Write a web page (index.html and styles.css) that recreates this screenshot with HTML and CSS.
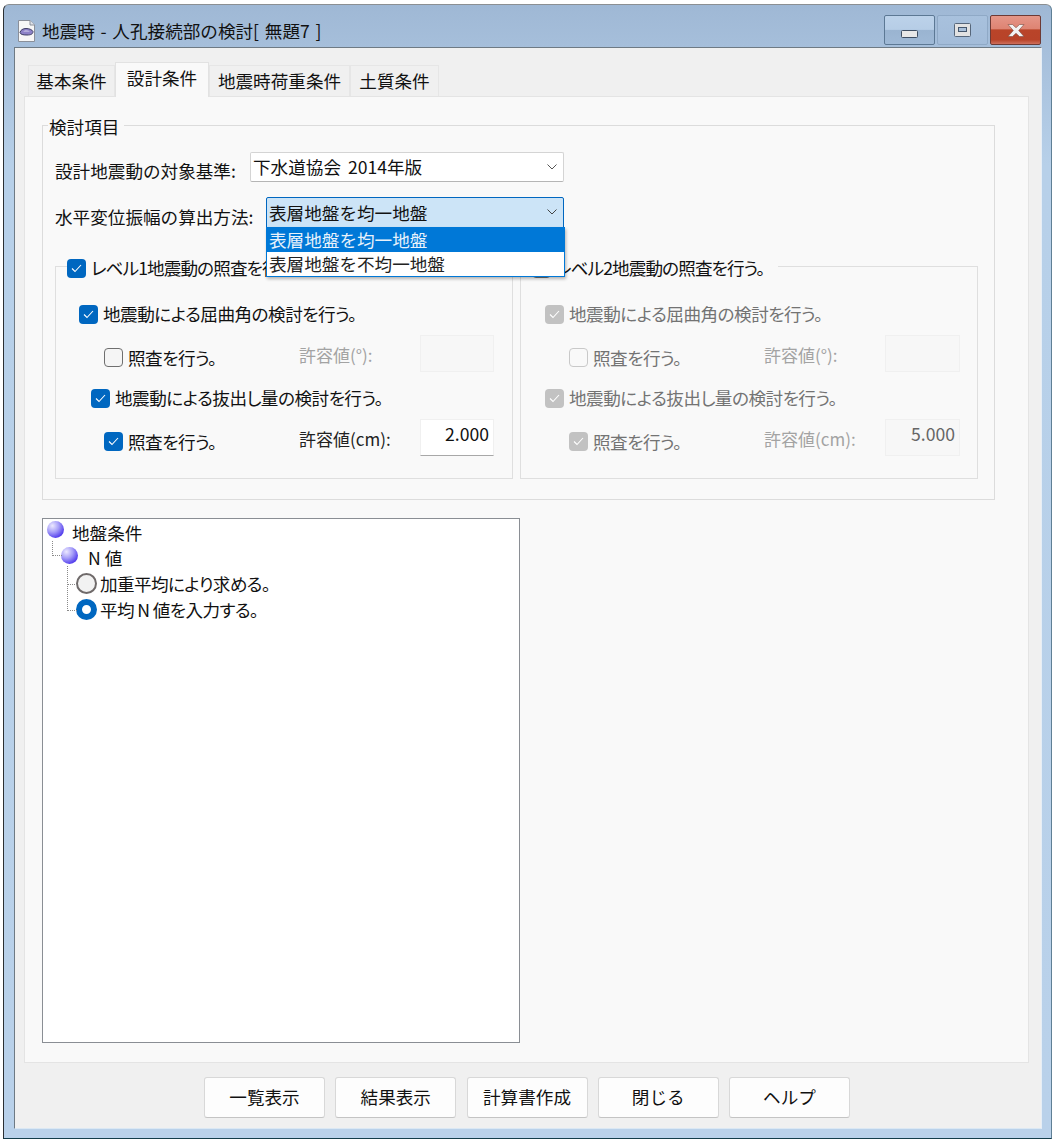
FILE: index.html
```html
<!DOCTYPE html>
<html lang="ja">
<head>
<meta charset="utf-8">
<title>地震時 - 人孔接続部の検討</title>
<link rel="stylesheet" href="styles.css">
</head>
<body>
<div class="window">
  <header class="titlebar">
    <svg class="appicon" width="19" height="24" viewBox="0 0 19 24"><path d="M1.5 1.5H13L17.5 6V22.5H1.5Z" fill="#f7f7f7" stroke="#8a8f99"/><path d="M13 1.5V6H17.5" fill="#dfe3ea" stroke="#8a8f99"/><path d="M3 13.5C3.5 11 6 9.5 9 9.5C12 9.5 15 10.500 16 12.500C16 15 14 16 10 16C6 16 3.500 15.500 3 13.500Z" fill="#8d82c8" stroke="#3d3d63"/><path d="M6 12.500C7.500 11 11 11 13 12.500Z" fill="#d9d6f0"/></svg>
    <h1 class="title">地震時 - 人孔接続部の検討[ 無題7 ]</h1>
    <div class="controls">
      <div class="ctl">
        <svg width="18" height="9" viewBox="0 0 18 9"><rect x=".5" y=".5" width="16" height="7" rx="1" fill="#e8e8e8" stroke="#3f4f63"/></svg>
      </div>
      <div class="ctl ctl-max">
        <svg width="18" height="14" viewBox="0 0 18 14"><rect x=".5" y=".5" width="16" height="13" rx="1" fill="#e2e2e2" stroke="#56667a"/><rect x="4.500" y="4.500" width="8" height="4" fill="#a9c0da" stroke="#44566c"/></svg>
      </div>
      <div class="ctl ctl-close">
        <svg width="18" height="13" viewBox="0 0 18 13"><path d="M1 0.500H5.500L9 3.700L12.500 0.500H17L11.700 6.500L17 12.500H12.500L9 9.300L5.500 12.500H1L6.300 6.500Z" fill="#f2f2f2" stroke="#7c4a40" stroke-width=".6"/></svg>
      </div>
    </div>
  </header>
  <main class="client">
    <nav class="tabs">
      <div class="tab">基本条件</div>
      <div class="tab tab-active">設計条件</div>
      <div class="tab tab-wide">地震時荷重条件</div>
      <div class="tab">土質条件</div>
    </nav>
    <section class="panel">
      <fieldset class="outer">
        <legend class="outer-legend">検討項目</legend>
        <div class="form-row first">
          <span class="form-label lab-a">設計地震動の対象基準:</span>
          <div class="combo combo-a">
            <span>下水道協会 2014年版</span>
            <svg class="chev" width="10" height="6" viewBox="0 0 10 6"><path d="M.5.500L5 5L9.500.500" fill="none" stroke="#555"/></svg>
          </div>
        </div>
        <div class="form-row second">
          <span class="form-label lab-b">水平変位振幅の算出方法:</span>
          <div class="combo combo-b">
            <span>表層地盤を均一地盤</span>
            <svg class="chev" width="10" height="6" viewBox="0 0 10 6"><path d="M.5.500L5 5L9.500.500" fill="none" stroke="#444"/></svg>
            <ul class="dropdown">
              <li class="opt opt-on">表層地盤を均一地盤</li>
              <li class="opt">表層地盤を不均一地盤</li>
            </ul>
          </div>
        </div>
        <div class="groups">
          <fieldset class="group">
            <legend class="group-legend">
              <label class="check"><span class="box on"><svg width="11" height="9" viewBox="0 0 11 9"><path d="M1 4.500L4 7.500L10 1" fill="none" stroke="#fff" stroke-width="1.100"/></svg></span>レベル1地震動の照査を行う。</label>
            </legend>
            <div class="row in-a"><label class="check"><span class="box on"><svg width="11" height="9" viewBox="0 0 11 9"><path d="M1 4.500L4 7.500L10 1" fill="none" stroke="#fff" stroke-width="1.100"/></svg></span>地震動による屈曲角の検討を行う。</label></div>
            <div class="row tol-row"><label class="check"><span class="box off"></span>照査を行う。</label><span class="tol muted">許容値(°):</span><span class="num num-off"></span></div>
            <div class="row in-c"><label class="check"><span class="box on"><svg width="11" height="9" viewBox="0 0 11 9"><path d="M1 4.500L4 7.500L10 1" fill="none" stroke="#fff" stroke-width="1.100"/></svg></span>地震動による抜出し量の検討を行う。</label></div>
            <div class="row tol-row"><label class="check"><span class="box on"><svg width="11" height="9" viewBox="0 0 11 9"><path d="M1 4.500L4 7.500L10 1" fill="none" stroke="#fff" stroke-width="1.100"/></svg></span>照査を行う。</label><span class="tol">許容値(cm):</span><span class="num num-on">2.000</span></div>
          </fieldset>
          <fieldset class="group disabled">
            <legend class="group-legend">
              <label class="check"><span class="box off"></span>レベル2地震動の照査を行う。</label>
            </legend>
            <div class="row in-a"><label class="check"><span class="box dis"><svg width="11" height="9" viewBox="0 0 11 9"><path d="M1 4.500L4 7.500L10 1" fill="none" stroke="#fff" stroke-width="1.100"/></svg></span>地震動による屈曲角の検討を行う。</label></div>
            <div class="row tol-row"><label class="check"><span class="box dis-off"></span>照査を行う。</label><span class="tol muted">許容値(°):</span><span class="num num-off"></span></div>
            <div class="row in-d"><label class="check"><span class="box dis"><svg width="11" height="9" viewBox="0 0 11 9"><path d="M1 4.500L4 7.500L10 1" fill="none" stroke="#fff" stroke-width="1.100"/></svg></span>地震動による抜出し量の検討を行う。</label></div>
            <div class="row tol-row"><label class="check"><span class="box dis"><svg width="11" height="9" viewBox="0 0 11 9"><path d="M1 4.500L4 7.500L10 1" fill="none" stroke="#fff" stroke-width="1.100"/></svg></span>照査を行う。</label><span class="tol muted">許容値(cm):</span><span class="num num-off">5.000</span></div>
          </fieldset>
        </div>
      </fieldset>
      <div class="tree">
        <div class="node n-root"><span class="sphere"></span><span class="node-text">地盤条件</span></div>
        <div class="node n-sub"><span class="sphere"></span><span class="node-text">N 値</span></div>
        <div class="node n-opt"><span class="radio"></span><span>加重平均により求める。</span></div>
        <div class="node n-opt n-last"><span class="radio radio-on"></span><span>平均 N 値を入力する。</span></div>
      </div>
    </section>
    <footer class="buttons">
      <button class="btn">一覧表示</button>
      <button class="btn">結果表示</button>
      <button class="btn">計算書作成</button>
      <button class="btn">閉じる</button>
      <button class="btn">ヘルプ</button>
    </footer>
  </main>
</div>
</body>
</html>
```
FILE: styles.css
```css
* { box-sizing: border-box; }
html, body { margin: 0; padding: 0; background: #fff; }
body {
  padding: 4px 1px 4px 3px;
  font-family: "Noto Sans CJK JP", "Noto Sans", sans-serif;
  font-size: 17.6px;
  line-height: 22px;
  color: #111;
}
.window {
  width: 1049px;
  height: 1135px;
  display: flex;
  flex-direction: column;
  padding: 0 9px 9px 10px;
  background: linear-gradient(#9fb8d5 0, #a6bfdb 45px, #b7d0e9 160px, #b9d1ea 100%);
  border: 1px solid #2b2f33;
  border-top-color: #8b8f92;
  border-right-color: #5f7f95;
  border-bottom-color: #123c4a;
  border-radius: 6px 6px 0 0;
}
.titlebar { height: 42px; display: flex; align-items: flex-start; flex: none; }
.appicon { margin: 14px 6px 0 3px; flex: none; }
.title { margin: 14px 0 0; font-size: 17.6px; line-height: 24px; font-weight: 400; color: #111; word-spacing: 1.8px; }
.controls { margin-left: auto; margin-top: 10px; margin-right: 1px; display: flex; gap: 2px; }
.ctl {
  width: 51px;
  height: 30px;
  display: flex;
  align-items: center;
  justify-content: center;
  padding-top: 8px;
  border: 1px solid #5c7894;
  border-radius: 2px;
  background: linear-gradient(#bcd2ea 0, #b6cde6 48%, #9ab4d1 50%, #9fb9d6 100%);
}
.ctl-max { border-color: #8fa9c6; background: linear-gradient(#a8c1dd, #a3bcd9); padding-top: 0; }
.ctl-close {
  padding-top: 0;
  border-color: #6d3a35;
  background: linear-gradient(#e59688 0, #de8473 45%, #b94429 50%, #b84329 85%, #cf6f5c 100%);
}
.client {
  flex: 1;
  display: flex;
  flex-direction: column;
  background: #f0f0f0;
  border: 1px solid #6e7a84;
  border-right-color: #e6eef6;
  border-bottom-color: #dbe8f4;
  padding-top: 14px;
}
.tabs { display: flex; margin-left: 13px; height: 34px; align-items: flex-end; position: relative; z-index: 1; }
.tab {
  width: 87px;
  height: 31px;
  text-align: center;
  padding-top: 4px;
  border: 1px solid #e6e6e6;
  border-bottom: 0;
  background: #f0f0f0;
  white-space: nowrap;
}
.tab-active {
  width: 94px;
  height: 35px;
  margin-bottom: -1px;
  padding-top: 4px;
  background: #f9f9f9;
  border-color: #e2e2e2;
}
.tab-wide { width: 141px; }
.tab:last-child { width: 89px; }
.panel {
  width: 1005px;
  height: 967px;
  margin-left: 9px;
  padding: 19px 0 0 17px;
  background: #f9f9f9;
  border: 1px solid #e4e4e4;
}
.outer {
  width: 953px;
  height: 384px;
  margin: 0;
  padding: 0 16px 0 12px;
  border: 1px solid #dcdcdc;
  min-width: 0;
}
.outer-legend { margin-left: -7px; padding: 0 5px 0 1px; line-height: 22px; height: 19px; }
.form-row { display: flex; align-items: center; }
.form-row.first { margin-top: 17px; height: 30px; }
.form-row.second { margin-top: 15px; height: 31px; }
.form-label { padding-top: 8px; flex: none; white-space: nowrap; }
.lab-a { width: 195px; }
.lab-b { width: 211px; }
.combo {
  position: relative;
  flex: none;
  height: 100%;
  display: flex;
  align-items: center;
  padding-left: 2px;
}
.combo-a { width: 314px; background: #fff; border: 1px solid #d4d4d4; border-bottom-color: #b5b5b5; border-radius: 2px; word-spacing: 3px; }
.combo-b { width: 298px; background: #cce4f7; border: 1px solid #0067c0; border-radius: 2px 2px 0 0; }
.chev { position: absolute; right: 6px; top: 11px; }
.dropdown {
  position: absolute;
  left: -1px;
  top: 29px;
  width: 299px;
  height: 50px;
  margin: 0;
  padding: 0;
  list-style: none;
  background: #fff;
  border: 1px solid #0078d7;
  box-shadow: 1px 2px 3px rgba(0, 0, 0, .28);
  z-index: 3;
}
.opt { height: 24px; line-height: 23px; padding-left: 2px; color: #222; }
.opt-on { background: #0078d7; color: #e9f2fb; }
.groups { display: grid; grid-template-columns: 458px 458px; column-gap: 7px; margin-top: 30px; }
.group {
  height: 221px;
  min-width: 0;
  margin: 0;
  padding: 0;
  border: 1px solid #dfdfdf;
}
.group-legend { margin-left: 11px; padding: 0 14px 0 0; height: 16px; line-height: 20px; }
.group-legend .check { letter-spacing: -.9px; }
.row { height: 42px; display: flex; align-items: center; }
.in-a { padding-left: 23px; margin-top: 19px; }
.in-c { padding-left: 35px; }
.in-d { padding-left: 24px; }
.disabled .row, .disabled .check { color: #737373; }
.disabled .group-legend .check { color: #111; }
.disabled .in-a { padding-left: 24px; }
.tol-row {
  display: grid;
  grid-template-columns: 195px 121px 74px;
  padding-left: 48px;
  align-items: center;
}
.disabled .tol-row { grid-template-columns: 195px 121px 75px; }
.check { display: flex; align-items: center; gap: 5px; white-space: nowrap; font-feature-settings: "palt"; letter-spacing: -.5px; }
.box {
  width: 19px;
  height: 19px;
  flex: none;
  border-radius: 4px;
  display: flex;
  align-items: center;
  justify-content: center;
}
.box.on { background: #0067c0; }
.box.off { background: #f5f5f5; border: 1px solid #6f6f6f; }
.box.dis { background: #c2c2c2; }
.box.dis-off { background: #f9f9f9; border: 1px solid #c9c9c9; }
.tol { font-size: 17px; color: #222; margin-bottom: 5px; white-space: nowrap; }
.tol.muted, .disabled .tol { color: #a3a3a3; }
.num {
  height: 37px;
  margin-bottom: 8px;
  text-align: right;
  padding: 3px 4px 0 0;
  border: 1px solid #f0f0f0;
}
.num-off { background: #f7f7f7; color: #666; }
.num-on { background: #fff; color: #111; border-bottom-color: #a8a8a8; }
.tree {
  width: 478px;
  height: 525px;
  margin-top: 18px;
  padding-top: 1px;
  background: #fff;
  border: 1px solid #8a8e94;
}
.node { position: relative; display: flex; align-items: center; height: 25.600px; white-space: nowrap; }
.n-root { padding-left: 4px; }
.n-root .node-text { margin-left: 8px; }
.n-sub { padding-left: 18px; }
.n-sub .node-text { margin-left: 10px; }
.n-opt { padding-left: 33px; font-feature-settings: "palt"; letter-spacing: -.6px; }
.sphere {
  width: 17px;
  height: 17px;
  border-radius: 50%;
  margin-top: -6px;
  background: radial-gradient(circle at 32% 28%, #ece9ff 0, #a79ff8 38%, #5a46ee 72%, #2a0fd6 100%);
}
.radio {
  width: 21px;
  height: 21px;
  border-radius: 50%;
  background: #f2f2f2;
  border: 2px solid #6f6a6a;
  margin: 0 3px 0 0;
}
.radio-on { background: #fff; border: 6px solid #0067c0; }
.n-sub::before {
  content: "";
  position: absolute;
  left: 9px;
  top: -5px;
  width: 9px;
  height: 14px;
  border-left: 1px dotted #8a8a8a;
  border-bottom: 1px dotted #8a8a8a;
}
.n-opt::before {
  content: "";
  position: absolute;
  left: 24px;
  top: -5px;
  width: 9px;
  height: 18px;
  border-left: 1px dotted #8a8a8a;
  border-bottom: 1px dotted #8a8a8a;
}
.n-last::before { top: -13px; height: 26px; }
.buttons { display: flex; gap: 10.250px; padding: 14px 0 0 189px; }
.btn {
  width: 121px;
  height: 41px;
  padding: 0 0 2px;
  font: inherit;
  color: #111;
  background: #fdfdfd;
  border: 1px solid #d8d8d8;
  border-bottom-color: #c4c4c4;
  border-radius: 3px;
}
```
